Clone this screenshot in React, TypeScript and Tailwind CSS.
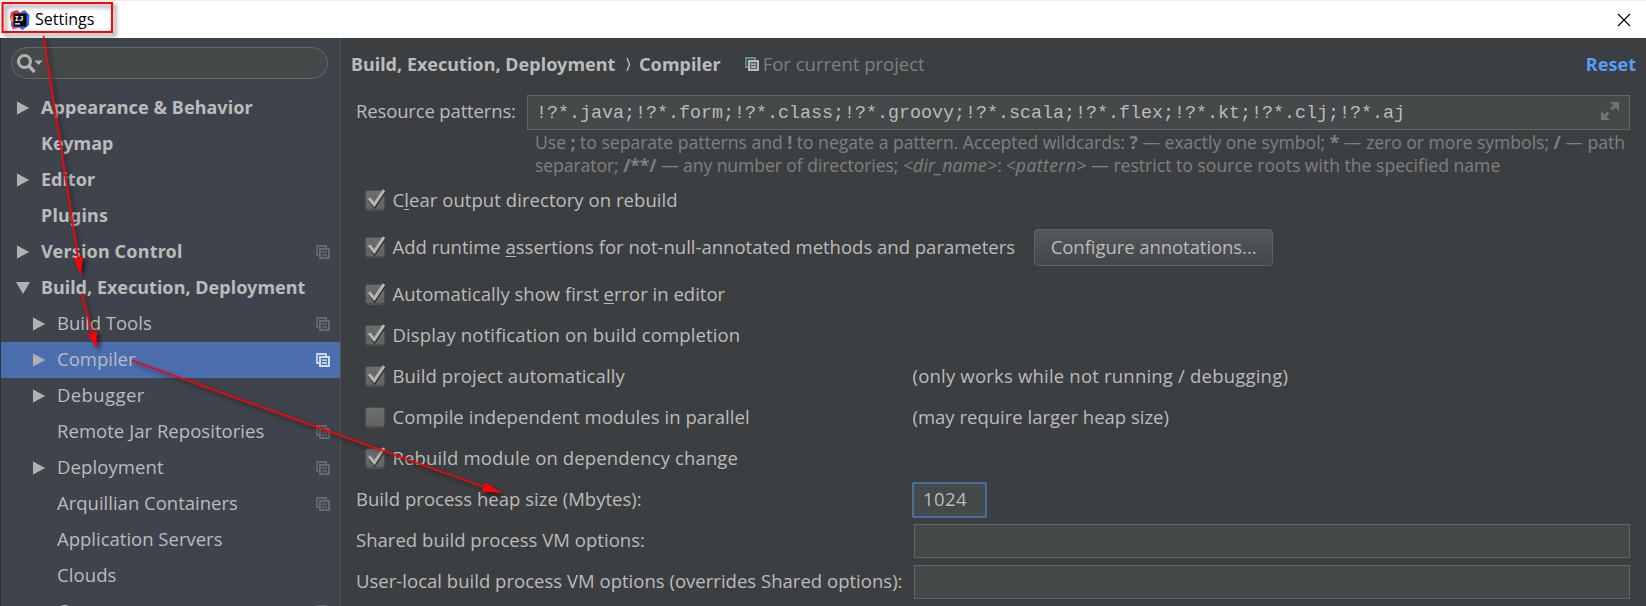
import type { ReactNode } from "react";

type TreeItem = {
  label: string;
  arrow?: "right" | "down";
  child?: boolean;
  project?: boolean;
  selected?: boolean;
  tracking?: string;
};

const tree: TreeItem[] = [
  { label: "Appearance & Behavior", arrow: "right", tracking: "tracking-[0.08px]" },
  { label: "Keymap" },
  { label: "Editor", arrow: "right" },
  { label: "Plugins", tracking: "tracking-[0.2px]" },
  { label: "Version Control", arrow: "right", project: true, tracking: "tracking-[0.18px]" },
  { label: "Build, Execution, Deployment", arrow: "down", tracking: "tracking-[0.05px]" },
  { label: "Build Tools", arrow: "right", child: true, project: true },
  { label: "Compiler", arrow: "right", child: true, project: true, selected: true },
  { label: "Debugger", arrow: "right", child: true, tracking: "tracking-[0.4px]" },
  { label: "Remote Jar Repositories", child: true, project: true, tracking: "tracking-[0.04px]" },
  { label: "Deployment", arrow: "right", child: true, project: true, tracking: "tracking-[0.1px]" },
  { label: "Arquillian Containers", child: true, project: true },
  { label: "Application Servers", child: true },
  { label: "Clouds", child: true, tracking: "tracking-[0.1px]" },
  { label: "Coverage", child: true, project: true },
];

function ProjectIcon({ back, front, fill }: { back: string; front: string; fill: string }) {
  return (
    <svg width="14" height="14" viewBox="0 0 14 14" className="block shrink-0">
      <path d="M10 3V1H1v9h2" fill="none" stroke={back} strokeWidth="1.8" />
      <rect x="4" y="4" width="9" height="9" fill={fill} stroke={front} strokeWidth="1.8" />
      <path d="M6 7.2h5M6 10h5" stroke={front} strokeWidth="1.3" />
    </svg>
  );
}

function TreeArrow({ dir }: { dir: "right" | "down" }) {
  return (
    <svg width="14" height="14" viewBox="0 0 14 14" className="block">
      <path d={dir === "right" ? "M1 0.5L13.3 7L1 13.5Z" : "M0 1H14L7 13Z"} fill="#afb0b1" />
    </svg>
  );
}

function TreeRow({ item }: { item: TreeItem }) {
  return (
    <div
      className={`flex h-9 shrink-0 items-center pb-px pr-[10px] ${item.child ? "pl-[31px]" : "pl-[15px]"} ${
        item.selected ? "bg-[#4b6eaf]" : ""
      }`}
    >
      <span className="w-[25px] shrink-0">{item.arrow && <TreeArrow dir={item.arrow} />}</span>
      <span
        className={`grow whitespace-nowrap pb-px ${
          item.child ? "text-[18.5px]" : "font-['Noto_Sans'] text-[18px] font-bold"
        } ${item.tracking ?? ""}`}
      >
        {item.label}
      </span>
      {item.project &&
        (item.selected ? (
          <ProjectIcon back="#c6d3ea" front="#e3e7ef" fill="#4b6eaf" />
        ) : (
          <ProjectIcon back="#5f6973" front="#6a6e72" fill="#3f434c" />
        ))}
    </div>
  );
}

function Checkbox({ checked = true }: { checked?: boolean }) {
  return (
    <svg width="22" height="24" viewBox="0 0 22 24" className="mb-px block shrink-0">
      <defs>
        <linearGradient id="box" x1="0" y1="0" x2="0" y2="1">
          <stop offset="0" stopColor="#6d6e6e" />
          <stop offset="1" stopColor="#626464" />
        </linearGradient>
      </defs>
      <path d="M1.5 22.5h17" stroke="#4f5152" />
      <rect x="0.5" y="2.5" width="19" height="19" rx="2" fill="url(#box)" stroke="#484a4b" strokeWidth="0.6" />
      {checked && (
        <>
          <path d="M4.5 11.5L9.7 18.6L19.6 3.6" fill="none" stroke="#2c2e2f" strokeWidth="3" />
          <path d="M4 10.2L9.3 16.8L19 2.2" fill="none" stroke="#b4b5b5" strokeWidth="3" />
        </>
      )}
    </svg>
  );
}

function Option({
  children,
  note,
  checked,
  tracking = "",
  noteTracking = "",
}: {
  children: ReactNode;
  note?: string;
  checked?: boolean;
  tracking?: string;
  noteTracking?: string;
}) {
  return (
    <div className="flex h-[41px] shrink-0 items-center pl-[23.5px]">
      <Checkbox checked={checked} />
      <span className={`whitespace-nowrap pb-[2px] pl-[6px] ${note ? "w-[526px]" : ""} ${tracking}`}>{children}</span>
      {note && <span className={`whitespace-nowrap pb-[2px] ${noteTracking}`}>{note}</span>}
    </div>
  );
}

function Mnemonic({ children }: { children: string }) {
  return <span className="underline decoration-1 underline-offset-2">{children}</span>;
}

function Field({ label, children, tracking = "" }: { label: string; children: ReactNode; tracking?: string }) {
  return (
    <div className="flex h-[41px] shrink-0 items-center pl-[15px]">
      <span className={`w-[556px] shrink-0 whitespace-nowrap pb-[2px] ${tracking}`}>{label}</span>
      {children}
    </div>
  );
}

function Logo() {
  return (
    <svg width="20" height="20" viewBox="0 0 20 20" className="block">
      <path d="M1 2L7 0L11 3V10L4 12L0 8Z" fill="#f4364c" />
      <path d="M1 10L5 9L9 18L3 19L1 16Z" fill="#b14a9c" />
      <path d="M0 8L3 6V12L1 12Z" fill="#fb8b3c" />
      <path d="M11 2L15 0.5L19.5 5L19 15L12.5 20L8 17Z" fill="#1f6fe5" />
      <path d="M12 0.8L15 0.5L17 3H12Z" fill="#5b62c9" />
      <rect x="3.5" y="3.5" width="13" height="13" fill="#0b0b0d" />
      <text x="4.6" y="10.5" fill="#fff" fontSize="7.5" fontWeight="700" fontFamily="Liberation Mono">
        IJ
      </text>
      <rect x="5" y="13.2" width="5" height="1.3" fill="#fff" />
    </svg>
  );
}

function Annotations() {
  return (
    <svg
      width="1646"
      height="606"
      viewBox="0 0 1646 606"
      className="pointer-events-none absolute left-0 top-0 drop-shadow-[3px_3px_2px_rgba(0,0,0,0.55)]"
    >
      <rect x="2.5" y="3" width="109.5" height="29" fill="none" stroke="#fb0207" strokeWidth="2" />
      <g stroke="#fb0207" strokeWidth="1.7" fill="#fb0207">
        <path d="M43.5 36L78 258" />
        <path d="M82 294L92 333" />
        <path d="M132 360.5L484 487" />
      </g>
      <g fill="#fb0207">
        <path d="M80.7 276L73.3 257L78 259L83 255.5Z" />
        <path d="M97 349L87 333L92 334L96.5 330Z" />
        <path d="M502 493L481.5 491.5L484 487L485.5 482.5Z" />
      </g>
    </svg>
  );
}

export default function App() {
  return (
    <div className="relative flex h-[606px] w-[1646px] flex-col overflow-hidden bg-[#3c3f41] font-['Open_Sans','Noto_Sans',sans-serif] text-[18.5px] leading-6 text-[#bbbbbb]">
      <header className="flex h-[38px] shrink-0 items-center border-t border-[#eeeeee] bg-white pl-[10px] pr-[15px] text-black">
        <Logo />
        <span className="grow pb-px pl-[5px] text-[16px]">Settings</span>
        <svg width="14" height="14" viewBox="0 0 14 14">
          <path d="M1 1L13 13M13 1L1 13" stroke="#000" strokeWidth="1.1" />
        </svg>
      </header>

      <div className="flex min-h-0 grow">
        <aside className="flex w-[341px] shrink-0 flex-col overflow-hidden border-l border-r border-l-[#303336] border-r-[#515355] bg-[#3f434c]">
          <div className="flex h-[52px] shrink-0 items-center px-[10px]">
            <div className="mb-[2px] flex h-8 w-[317px] shrink-0 items-center rounded-full border border-[#646768] bg-[#45494a] pl-[5px]">
              <svg width="28" height="22" viewBox="0 0 28 22">
                <circle cx="7.5" cy="9.5" r="6" fill="none" stroke="#afb1b3" strokeWidth="3" />
                <path d="M11.5 13.5L17.5 20" stroke="#afb1b3" strokeWidth="3.4" />
                <path d="M17.5 8.5H25.5L21.5 13Z" fill="#afb1b3" />
              </svg>
            </div>
          </div>
          {tree.map((item) => (
            <TreeRow key={item.label} item={item} />
          ))}
        </aside>

        <main className="flex min-w-0 grow flex-col">
          <div className="flex h-[52px] shrink-0 items-center whitespace-nowrap pl-[10px] pr-[10px]">
            <h1 className="flex items-center font-['Noto_Sans'] text-[18px] font-bold">
              <span className="w-[275px] tracking-[0.05px]">Build, Execution, Deployment</span>
              <svg width="5" height="15" viewBox="0 0 5 15" className="mr-[8px]">
                <path d="M1 1L3.5 7.5L1 14" fill="none" stroke="#bbbbbb" strokeWidth="1.4" />
              </svg>
              <span className="tracking-[0.05px]">Compiler</span>
            </h1>
            <span className="ml-[24px] mr-[4px]">
              <ProjectIcon back="#5f8ba3" front="#c3c5c6" fill="#5c6063" />
            </span>
            <span className="grow text-[#808080]">For current project</span>
            <a className="font-['Noto_Sans'] text-[18px] font-bold text-[#589df6]">Reset</a>
          </div>

          <div className="flex h-[45px] shrink-0 items-center pl-[15px] pr-4">
            <span className="w-[171px] shrink-0 pb-[3px] tracking-[-0.15px]">Resource patterns:</span>
            <div className="flex h-[35px] grow items-center border border-[#646464] bg-[#45494a] pl-[8px] pr-[10px]">
              <span className="grow whitespace-pre pt-[3px] font-['Liberation_Mono',monospace] text-[18.33px]">
                !?*.java;!?*.form;!?*.class;!?*.groovy;!?*.scala;!?*.flex;!?*.kt;!?*.clj;!?*.aj
              </span>
              <svg width="18" height="18" viewBox="0 0 18 18" className="mb-[3px]">
                <path d="M9 0H18V9ZM0 9V18H9Z" fill="#6e7577" />
                <path d="M10.5 7.5L15 3M3 15L7.5 10.5" stroke="#6e7577" strokeWidth="3" />
              </svg>
            </div>
          </div>

          <div className="h-[45px] shrink-0 whitespace-nowrap pl-[194px] text-[17.6px] leading-[23px] text-[#808080]">
            <p className="-mt-[4px] tracking-[-0.025px]">
              Use <b>;</b> to separate patterns and <b>!</b> to negate a pattern. Accepted wildcards: <b>?</b> — exactly one
              symbol; <b>*</b> — zero or more symbols; <b>/</b> — path
            </p>
            <p>
              <span className="tracking-[-0.08px]">
                separator; <b>/**/</b> — any number of directories;
              </span>{" "}
              <i className="tracking-[0.15px]">&lt;dir_name&gt;</i>:{" "}
              <i className="-ml-px tracking-[0.4px]">&lt;pattern&gt;</i> — restrict to source roots with the specified name
            </p>
          </div>

          <Option tracking="tracking-[0.06px]">
            C<Mnemonic>l</Mnemonic>ear output directory on rebuild
          </Option>
          <div className="flex h-[53px] shrink-0 items-center">
            <Option>
              Add runtime <Mnemonic>a</Mnemonic>ssertions for not-null-annotated methods and parameters
            </Option>
            <button className="ml-[19px] h-[37px] w-[239px] rounded-[4px] border border-[#5e6263] bg-linear-to-b from-[#53585a] to-[#43474a] pb-[2px] tracking-[-0.06px]">
              Configure annotations...
            </button>
          </div>
          <Option>
            Automatically show first <Mnemonic>e</Mnemonic>rror in editor
          </Option>
          <Option tracking="tracking-[0.14px]">Display notification on build completion</Option>
          <Option
            note="(only works while not running / debugging)"
            tracking="tracking-[0.09px]"
            noteTracking="tracking-[0.2px]"
          >
            Build project automatically
          </Option>
          <Option checked={false} note="(may require larger heap size)" tracking="tracking-[0.05px]">
            Compile independent modules in parallel
          </Option>
          <Option tracking="tracking-[0.13px]">Rebuild module on dependency change</Option>

          <Field label="Build process heap size (Mbytes):" tracking="tracking-[0.03px]">
            <div className="flex h-[36px] w-[75px] items-center rounded-[2px] border-2 border-[#466d9c] bg-[#45494a] pb-[2px] pl-[9px] tracking-[0.4px]">
              1024
            </div>
          </Field>
          <Field label="Shared build process VM options:" tracking="tracking-[0.03px]">
            <div className="ml-[2px] mr-4 h-[34px] grow border border-[#646464] bg-[#45494a]" />
          </Field>
          <Field label="User-local build process VM options (overrides Shared options):" tracking="tracking-[0.02px]">
            <div className="ml-[2px] mr-4 h-[34px] grow border border-[#646464] bg-[#45494a]" />
          </Field>
        </main>
      </div>

      <Annotations />
    </div>
  );
}
